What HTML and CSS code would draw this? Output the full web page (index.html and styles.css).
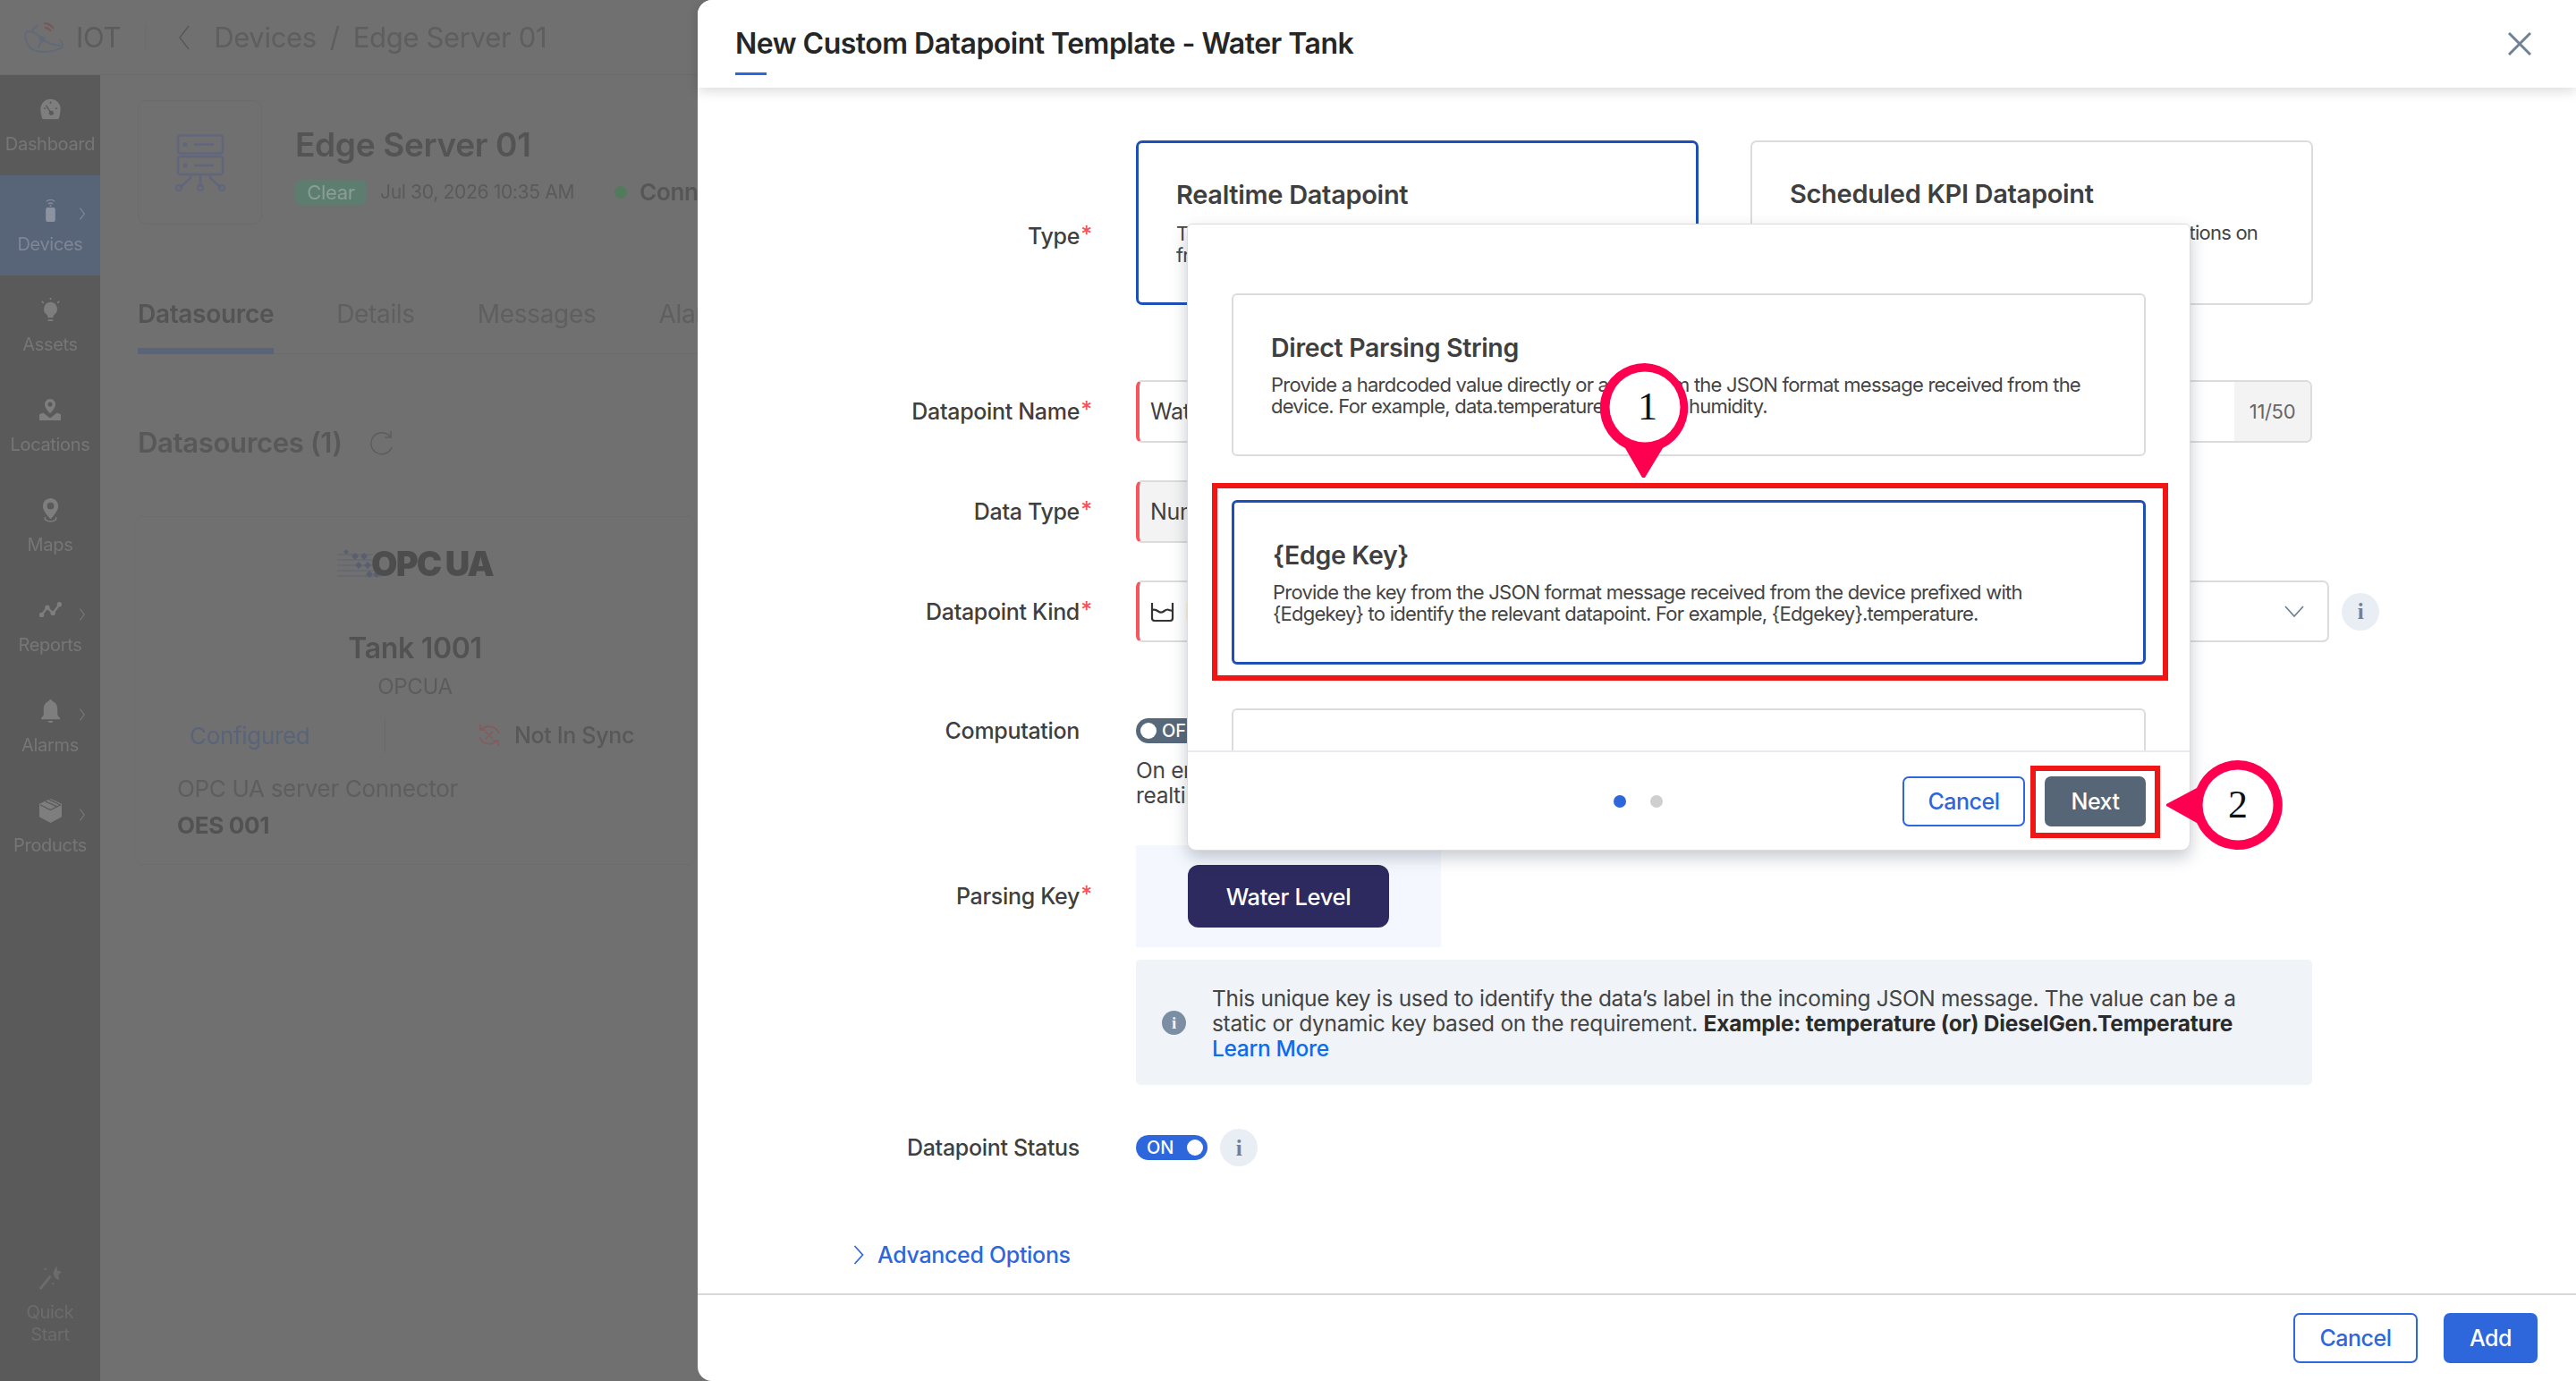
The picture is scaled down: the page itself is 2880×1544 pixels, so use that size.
FILE: index.html
```html
<!DOCTYPE html>
<html lang="en">
<head>
<meta charset="utf-8">
<title>New Custom Datapoint Template</title>
<link rel="stylesheet" href="styles.css">
</head>
<body>
<div class="app">
  <div class="backdrop">
    <header class="topbar">
      <svg class="logo" viewBox="0 0 44 40" width="44" height="40"><g fill="none" stroke="#626a78" stroke-width="2"><path d="M3 13c-3 3-2 8 0 13 3 7 10 10 18 10 10 0 20-3 22-6 1-2-2-6-3-8"/><path d="M3 13c5 0 12 3 17 8 6 5 14 8 21 8M7 14l8-8M20 22l-4 9"/><circle cx="20" cy="22" r="2.500"/></g><path d="M22 4c4 0 8 2 11 6M23 9c3 0 5 1 7 4" fill="none" stroke="#7a5656" stroke-width="2"/></svg>
      <span class="app-name">IOT</span>
      <span class="top-sep"></span>
      <svg class="back" viewBox="0 0 14 30" width="14" height="30"><path d="M12 2 2 15l10 13" fill="none" stroke="#585858" stroke-width="1.5"/></svg>
      <span class="crumb">Devices</span>
      <span class="crumb slash">/</span>
      <span class="crumb">Edge Server 01</span>
    </header>
    <div class="under">
      <nav class="sidebar">
        <a class="nav-item">
          <span class="nav-icon"><svg viewBox="0 0 28 28" width="27" height="24"><path d="M14 1a13 13 0 0 0-13 13c0 4 1 8 2 12a2 2 0 0 0 2 1h18a2 2 0 0 0 2-1c1-4 2-8 2-12A13 13 0 0 0 14 1z" fill="#7e7e7e"/><path d="m8 9 6 9M14 4v3M5 13h3M23 13h-3" stroke="#5a5a5a" stroke-width="1.6"/><circle cx="15" cy="19" r="3" fill="#5a5a5a"/></svg></span>
          <span class="nav-label">Dashboard</span>
        </a>
        <a class="nav-item active">
          <span class="nav-icon"><svg viewBox="0 0 28 42" width="19" height="28"><path d="M7 8c4-4 10-4 14 0M10 12c2-2 6-2 8 0" fill="none" stroke="#848b99" stroke-width="2"/><circle cx="14" cy="15" r="1.600" fill="#848b99"/><rect x="6" y="18" width="16" height="24" rx="3" fill="#8b92a0"/></svg><svg class="nav-chev" viewBox="0 0 10 20" width="7" height="14"><path d="m2 1 7 9-7 9" fill="none" stroke="#848b99" stroke-width="1.6"/></svg></span>
          <span class="nav-label">Devices</span>
        </a>
        <a class="nav-item">
          <span class="nav-icon"><svg viewBox="0 0 28 28" width="27" height="27"><path d="M14 5a8 8 0 0 0-5 14c1 1 2 2 2 4h6c0-2 1-3 2-4a8 8 0 0 0-5-14z" fill="#7e7e7e"/><path d="M11 26h6M14 0v2M4 4l2 2M24 4l-2 2" stroke="#7e7e7e" stroke-width="1.8"/></svg></span>
          <span class="nav-label">Assets</span>
        </a>
        <a class="nav-item">
          <span class="nav-icon"><svg viewBox="0 0 28 28" width="26" height="24"><path d="M14 0a7 7 0 0 0-7 7c0 4 4 9 7 12 3-3 7-8 7-12a7 7 0 0 0-7-7z" fill="#7e7e7e"/><circle cx="14" cy="7" r="3" fill="#5a5a5a"/><path d="M0 28v-8l5-2 9 7 9-7 5 2v8z" fill="#7e7e7e"/></svg></span>
          <span class="nav-label">Locations</span>
        </a>
        <a class="nav-item">
          <span class="nav-icon"><svg viewBox="0 0 28 28" width="27" height="27"><path d="M14 0a9 9 0 0 0-9 9c0 5 5 11 9 15 4-4 9-10 9-15a9 9 0 0 0-9-9z" fill="#7e7e7e"/><circle cx="14" cy="9" r="4" fill="#5a5a5a"/><path d="M8 22c-2 3 2 5 6 5s8-2 6-5" fill="none" stroke="#7e7e7e" stroke-width="1.5"/></svg></span>
          <span class="nav-label">Maps</span>
        </a>
        <a class="nav-item">
          <span class="nav-icon"><svg viewBox="0 0 28 20" width="27" height="18"><path d="m3 16 7-9 7 7 8-11" fill="none" stroke="#7e7e7e" stroke-width="2.600"/><circle cx="3" cy="16" r="3" fill="#7e7e7e"/><circle cx="10" cy="7" r="3" fill="#7e7e7e"/><circle cx="17" cy="14" r="3" fill="#7e7e7e"/><circle cx="25" cy="3" r="3" fill="#7e7e7e"/></svg><svg class="nav-chev" viewBox="0 0 10 20" width="7" height="14"><path d="m2 1 7 9-7 9" fill="none" stroke="#7a7a7a" stroke-width="1.6"/></svg></span>
          <span class="nav-label">Reports</span>
        </a>
        <a class="nav-item">
          <span class="nav-icon"><svg viewBox="0 0 28 28" width="27" height="27"><path d="M14 1c-1 0-2 1-2 2-4 1-6 5-6 9v7l-3 4v1h22v-1l-3-4v-7c0-4-2-8-6-9 0-1-1-2-2-2z" fill="#7e7e7e"/><path d="M11 26a3 2 0 0 0 6 0z" fill="#7e7e7e"/></svg><svg class="nav-chev" viewBox="0 0 10 20" width="7" height="14"><path d="m2 1 7 9-7 9" fill="none" stroke="#7a7a7a" stroke-width="1.6"/></svg></span>
          <span class="nav-label">Alarms</span>
        </a>
        <a class="nav-item">
          <span class="nav-icon"><svg viewBox="0 0 28 28" width="27" height="27"><path d="M14 0 1 6v15l13 7 13-7V6z" fill="#7e7e7e"/><path d="m8 3 13 6M12 1l13 6M2 7l12 6 12-6" fill="none" stroke="#5a5a5a" stroke-width="1.4"/></svg><svg class="nav-chev" viewBox="0 0 10 20" width="7" height="14"><path d="m2 1 7 9-7 9" fill="none" stroke="#7a7a7a" stroke-width="1.6"/></svg></span>
          <span class="nav-label">Products</span>
        </a>
        <a class="nav-item quick">
          <span class="nav-icon"><svg viewBox="0 0 28 28" width="27" height="27"><path d="m21 0 1 6 5 1-4 4 1 6-5-3-2-6z" fill="#6c6c6c"/><path d="M14 12 2 27" stroke="#6c6c6c" stroke-width="3"/><circle cx="8" cy="4" r="1.400" fill="#6c6c6c"/><circle cx="17" cy="21" r="1.200" fill="#6c6c6c"/></svg></span>
          <span class="nav-label">Quick<br>Start</span>
        </a>
      </nav>
      <main class="content">
        <section class="device-head">
          <div class="device-box">
            <svg viewBox="0 0 58 64" width="58" height="64"><g fill="none" stroke="#62667c" stroke-width="2.600"><rect x="4" y="1.500" width="50" height="20" rx="2.500"/><rect x="4" y="25" width="50" height="20" rx="2.500"/><path d="M22 11.500h22M22 35h22M29 45v14M18 45v4L6 60M40 45v4l12 11"/></g><circle cx="12" cy="11.500" r="2.600" fill="#62667c"/><circle cx="12" cy="35" r="2.600" fill="#62667c"/><g fill="none" stroke="#62667c" stroke-width="2"><circle cx="5" cy="60" r="3"/><circle cx="29" cy="60" r="3"/><circle cx="53" cy="60" r="3"/></g></svg>
          </div>
          <div class="device-meta">
            <h1 class="device-title">Edge Server 01</h1>
            <div class="device-status">
              <span class="badge-clear">Clear</span>
              <span class="device-date">Jul 30, 2026 10:35 AM</span>
              <span class="dot-green"></span>
              <span class="device-conn">Connected</span>
            </div>
          </div>
        </section>
        <div class="tabs">
          <span class="tab current">Datasource</span>
          <span class="tab">Details</span>
          <span class="tab">Messages</span>
          <span class="tab">Alarms</span>
        </div>
        <h2 class="ds-title">Datasources (1)
          <svg viewBox="0 0 28 28" width="28" height="28"><path d="M23 7a12 12 0 1 0 2 12" fill="none" stroke="#5c5c5c" stroke-width="1.400"/><path d="M24 1v7h-7" fill="none" stroke="#5c5c5c" stroke-width="1.400"/></svg>
        </h2>
        <article class="ds-card">
          <div class="opc-logo">
            <svg viewBox="0 0 56 32" width="56" height="32"><g stroke="#5f6371" stroke-width="1"><path d="M0 6h40M0 12h40M0 18h44M0 24h48M0 30h50"/></g><g fill="#5a5f70"><path d="m10 0 3 3-3 3-3-3zM20 4l4 4-4 4-4-4zM30 4l4 4-4 4-4-4zM24 14l4 4-4 4-4-4zM34 14l4 4-4 4-4-4zM36 24l4 4-4 4-4-4zM44 24l4 4-4 4-4-4z"/></g></svg>
            <span class="opc-text">OPC UA</span>
          </div>
          <div class="ds-name">Tank 1001</div>
          <div class="ds-type">OPCUA</div>
          <div class="ds-states">
            <span class="state configured">Configured</span>
            <span class="state sync"><svg viewBox="0 0 28 28" width="28" height="28"><g fill="none" stroke="#86595c" stroke-width="1.600"><path d="M5 8a12 12 0 0 1 20 4M23 20A12 12 0 0 1 3 16M4 2v6h6M24 26v-6h-6M10 10l8 8M18 10l-8 8"/></g></svg>Not In Sync</span>
          </div>
          <div class="ds-conn">OPC UA server Connector</div>
          <div class="ds-edge">OES 001</div>
        </article>
      </main>
    </div>
  </div>

  <section class="modal">
    <header class="modal-head">
      <h1 class="modal-title">New Custom Datapoint Template - Water Tank</h1>
      <svg class="close" viewBox="0 0 26 26" width="26" height="26"><path d="m1 1 24 24M25 1 1 25" stroke="#6f8295" stroke-width="3" fill="none"/></svg>
    </header>
    <div class="form">
      <div class="row row-type">
        <label class="label">Type<i>*</i></label>
        <div class="type-cards">
          <div class="type-card selected">
            <h3 class="card-title">Realtime Datapoint</h3>
            <p class="card-text">This datapoint receives values directly<br>from the device as messages arrive.</p>
          </div>
          <div class="type-card">
            <h3 class="card-title">Scheduled KPI Datapoint</h3>
            <p class="card-text">Values are calculated periodically via computations on<br>the data.</p>
          </div>
        </div>
      </div>
      <div class="row row-name">
        <label class="label">Datapoint Name<i>*</i></label>
        <div class="input required">
          <span class="input-value">Water Level</span>
          <span class="counter">11/50</span>
        </div>
      </div>
      <div class="row row-dtype">
        <label class="label">Data Type<i>*</i></label>
        <div class="input required disabled"><span class="input-value">Number</span></div>
      </div>
      <div class="row row-kind">
        <label class="label">Datapoint Kind<i>*</i></label>
        <div class="kind-wrap">
          <div class="input required">
            <span class="input-value">
              <svg viewBox="0 0 27 22" width="27" height="22"><path d="M2 1v17a3 3 0 0 0 3 3h17a3 3 0 0 0 3-3V1" fill="none" stroke="#333" stroke-width="2.200"/><path d="M2 9c3-1 5 0 7 1.500s4 1.500 6 0 4-3 6-1.500l4 1" fill="none" stroke="#333" stroke-width="2.200"/></svg>
              Measurement
            </span>
            <svg class="chevron" viewBox="0 0 22 14" width="22" height="14"><path d="m1 1 10 11L21 1" fill="none" stroke="#6f8295" stroke-width="1.800"/></svg>
          </div>
          <span class="info-btn">i</span>
        </div>
      </div>
      <div class="row row-comp">
        <label class="label">Computation</label>
        <div class="comp">
          <span class="toggle off"><b class="knob"></b>OFF</span>
          <p class="comp-text">On enabling this, the value of the datapoint is derived by applying a computation on the<br>realtime data.</p>
        </div>
      </div>
      <div class="row row-parse">
        <label class="label">Parsing Key<i>*</i></label>
        <div class="parse-panel"><span class="parse-btn">Water Level</span></div>
      </div>
      <div class="row row-note">
        <span></span>
        <div class="note">
          <span class="note-icon">i</span>
          <p class="note-text">This unique key is used to identify the data’s label in the incoming JSON message. The value can be a static or dynamic key based on the requirement. <strong>Example: temperature (or) DieselGen.Temperature</strong> <a class="learn">Learn More</a></p>
        </div>
      </div>
      <div class="row row-status">
        <label class="label">Datapoint Status</label>
        <div class="status">
          <span class="toggle on">ON<b class="knob"></b></span>
          <span class="info-btn">i</span>
        </div>
      </div>
      <a class="advanced">
        <svg viewBox="0 0 12 22" width="12" height="22"><path d="m1.500 1 9 10-9 10" fill="none" stroke="#2e66dc" stroke-width="1.700"/></svg>
        Advanced Options
      </a>
    </div>
    <footer class="modal-foot">
      <button class="btn ghost foot-cancel">Cancel</button>
      <button class="btn primary foot-add">Add</button>
    </footer>
  </section>

  <section class="popup">
    <div class="popup-body">
      <div class="pick-card">
        <h3 class="card-title pick-title">Direct Parsing String</h3>
        <p class="pick-text">Provide a hardcoded value directly or a key from the JSON format message received from the device. For example, data.temperature and data.humidity.</p>
      </div>
      <div class="pick-card selected">
        <h3 class="card-title pick-title">{Edge Key}</h3>
        <p class="pick-text">Provide the key from the JSON format message received from the device prefixed with {Edgekey} to identify the relevant datapoint. For example, {Edgekey}.temperature.</p>
      </div>
      <div class="pick-card last"></div>
    </div>
    <div class="popup-foot">
      <div class="dots"><span class="dot current"></span><span class="dot"></span></div>
      <div class="popup-actions">
        <button class="btn ghost pop-cancel">Cancel</button>
        <button class="btn slate pop-next">Next</button>
      </div>
    </div>
  </section>

  <div class="mark mark-card"></div>
  <div class="mark mark-next"></div>
  <div class="pin pin-one">
    <svg viewBox="0 0 102 132" width="102" height="132"><path d="M51 1a50 50 0 0 0-22 95l19 33h3l20-33A50 50 0 0 0 51 1z" fill="#ff0050"/><circle cx="51" cy="50" r="39.500" fill="#fff"/></svg>
    <span class="pin-num">1</span>
  </div>
  <div class="pin pin-two">
    <svg viewBox="0 0 132 102" width="132" height="102"><path d="M81 1a50 50 0 0 0-46 31L1 50v2l34 19A50 50 0 1 0 81 1z" fill="#ff0050"/><circle cx="81" cy="51" r="39.500" fill="#fff"/></svg>
    <span class="pin-num">2</span>
  </div>
</div>
</body>
</html>
```
FILE: styles.css
```css
* { box-sizing: border-box; }
html, body { margin: 0; padding: 0; }
body { font-family: Inter, "Liberation Sans", sans-serif; color: #3f3f3f; }
h1, h2, h3, p { margin: 0; }
button { font-family: inherit; }

.app { position: relative; display: flex; width: 2880px; height: 1544px; overflow: hidden; background: #fff; }

/* dimmed page behind the drawer */
.backdrop { display: flex; flex-direction: column; flex: 0 0 800px; min-width: 0; width: 800px; margin-right: -20px; overflow: hidden; background: #707070; color: #555; filter: blur(.7px); letter-spacing: -.02em; }
.topbar { display: flex; align-items: center; height: 84px; flex: none; padding-left: 27px; border-bottom: 1px solid #6b6b6b; }
.logo { flex: none; }
.app-name { margin-left: 14px; font-size: 31px; color: #5c5c5c; }
.top-sep { width: 1px; height: 30px; margin: 0 36px 0 27px; background: #6b6b6b; }
.back { flex: none; margin-right: 26px; }
.crumb { font-size: 31px; color: #5e5e5e; white-space: nowrap; }
.slash { margin: 0 15px; }

.under { display: flex; flex: 1; min-height: 0; }
.sidebar { display: flex; flex-direction: column; flex: 0 0 112px; background: #5a5a5a; }
.nav-item { display: flex; flex-direction: column; align-items: center; height: 112px; flex: none; padding-top: 24px; color: #767676; }
.nav-item.active { background: #586478; color: #7f8796; }
.nav-icon { position: relative; display: flex; align-items: center; justify-content: center; width: 100%; height: 28px; }
.nav-chev { position: absolute; right: 17px; top: 12px; }
.nav-label { margin-top: 13px; font-size: 20px; line-height: 25px; text-align: center; }
.quick { margin-top: auto; height: 154px; color: #6c6c6c; }

.content { flex: 1; min-width: 0; padding: 28px 0 0 42px; overflow: hidden; }
.device-head { display: flex; height: 139px; }
.device-box { display: flex; align-items: center; justify-content: center; flex: none; width: 139px; height: 139px; border: 1px solid #6b6b6b; border-radius: 10px; }
.device-meta { margin-left: 37px; padding-top: 28px; }
.device-title { font-size: 37px; line-height: 44px; font-weight: 600; color: #545454; white-space: nowrap; }
.device-status { display: flex; align-items: center; margin-top: 15px; white-space: nowrap; }
.badge-clear { width: 80px; height: 28px; border-radius: 7px; background: #5d7d70; color: #8a9e96; font-size: 22px; line-height: 28px; text-align: center; }
.device-date { margin-left: 15px; font-size: 21px; color: #5a5a5a; }
.dot-green { width: 14px; height: 14px; margin-left: 45px; border-radius: 50%; background: #527a5c; }
.device-conn { margin-left: 14px; font-size: 26px; font-weight: 600; color: #565656; }

.tabs { display: flex; gap: 70px; height: 145px; padding-top: 80px; border-bottom: 1px solid #6b6b6b; white-space: nowrap; }
.tab { height: 65px; font-size: 28px; line-height: 40px; color: #5f5f5f; }
.tab.current { font-weight: 600; color: #545454; border-bottom: 7px solid #5a6479; }
.ds-title { display: flex; align-items: center; gap: 30px; margin-top: 82px; font-size: 31px; line-height: 34px; font-weight: 600; color: #585858; white-space: nowrap; }
.ds-card { width: 628px; height: 390px; margin: 65px 0 0 -4px; padding: 36px 47px 0; border: 1px solid #6d6d6d; border-radius: 10px; }
.opc-logo { display: flex; align-items: center; justify-content: center; height: 32px; color: #4d4d4d; }
.opc-text { margin-left: -18px; font-size: 38px; line-height: 32px; font-weight: 900; letter-spacing: -.05em; }
.ds-name { margin-top: 59px; font-size: 32px; line-height: 40px; font-weight: 600; text-align: center; color: #525252; }
.ds-type { margin-top: 6px; font-size: 24px; line-height: 34px; text-align: center; color: #5c5c5c; }
.ds-states { display: flex; height: 40px; margin-top: 17px; }
.state { display: flex; align-items: center; justify-content: center; flex: 1; font-size: 26px; color: #585858; }
.state.configured { color: #5a6479; justify-content: flex-start; padding-left: 14px; border-right: 1px solid #6a6a6a; }
.state.sync { gap: 14px; padding-left: 81px; font-size: 25px; font-weight: 500; }
.ds-conn { margin-top: 20px; font-size: 26px; line-height: 40px; color: #5e5e5e; }
.ds-edge { margin-top: 1px; font-size: 26px; line-height: 40px; font-weight: 700; color: #525252; }

/* drawer */
.modal { position: relative; display: flex; flex-direction: column; flex: 1; min-width: 0; background: #fff; border-radius: 16px 0 0 16px; }
.modal-head { display: flex; align-items: center; justify-content: space-between; position: relative; z-index: 1; flex: none; height: 98px; padding: 0 50px 0 42px; background: #fff; border-radius: 16px 0 0 0; box-shadow: 0 4px 14px rgba(0,0,0,.14); }
.modal-head::after { content: ""; position: absolute; left: 42px; top: 81px; width: 35px; height: 3px; background: #2e66dc; }
.modal-title { font-size: 32px; line-height: 40px; font-weight: 600; color: #262626; letter-spacing: -.016em; white-space: nowrap; }
.close { flex: none; }

.form { flex: 1; min-height: 0; padding-top: 59px; letter-spacing: -.02em; }
.row { display: grid; grid-template-columns: 441px 1315px; column-gap: 49px; }
.label { justify-self: end; align-self: center; position: relative; padding-right: 14px; font-size: 25px; line-height: 30px; font-weight: 500; color: #3f3f3f; white-space: nowrap; }
.label i { position: absolute; right: 0; top: -2px; font-style: normal; color: #f2545b; }
.row-type .label { margin-top: 30px; }
.row-name { margin-top: 84px; }
.row-dtype, .row-kind { margin-top: 42px; }
.row-comp { margin-top: 84px; }
.row-comp .label { align-self: start; }
.row-parse { margin-top: 42px; }
.row-note { margin-top: 14px; }
.row-status { margin-top: 49px; }

.type-cards { display: flex; gap: 58px; }
.type-card { flex: 0 0 629px; height: 184px; padding: 40px 0 0 42px; border: 2px solid #dcdcdc; border-radius: 7px; }
.type-card.selected { padding-left: 42px; border: 3px solid #1e4fb8; }
.card-title { font-size: 29px; line-height: 36px; font-weight: 600; color: #3f3f3f; white-space: nowrap; }
.pick-title { font-size: 28.500px; }
.card-text { margin-top: 13px; font-size: 22px; line-height: 24px; color: #444; letter-spacing: -.035em; white-space: nowrap; }

.input { display: flex; align-items: center; height: 70px; border: 2px solid #dcdcdc; border-left: 4px solid #f9555f; border-radius: 7px; overflow: hidden; }
.input-value { display: flex; align-items: center; gap: 12px; flex: 1; padding-left: 12px; font-size: 25px; color: #3f3f3f; }
.counter { display: flex; align-items: center; justify-content: center; flex: 0 0 85px; height: 100%; background: #f3f3f3; font-size: 22px; color: #666; }
.disabled { width: 700px; background: #f3f3f3; }
.kind-wrap { display: flex; align-items: center; width: 1389px; }
.kind-wrap .input { flex: 0 0 1334px; height: 69px; }
.chevron { flex: none; margin-right: 26px; }
.info-btn { display: flex; align-items: center; justify-content: center; flex: none; width: 42px; height: 42px; margin-left: 14px; border-radius: 50%; background: #e9edf4; color: #6f8295; font: 700 25px/1 "Liberation Serif", serif; }

.comp { min-width: 0; padding-top: 1px; }
.toggle { display: flex; align-items: center; width: 80px; height: 28px; border-radius: 14px; color: #fff; font-size: 20px; font-weight: 500; line-height: 28px; letter-spacing: 0; }
.toggle.off { gap: 6px; padding-left: 5px; background: #56687a; }
.toggle.on { justify-content: space-between; padding: 0 5px 0 12px; background: #2e66dc; }
.knob { flex: none; width: 18px; height: 18px; border-radius: 50%; background: #fff; }
.comp-text { margin-top: 16px; font-size: 24.500px; line-height: 28px; color: #444; white-space: nowrap; }

.parse-panel { display: flex; align-items: center; width: 341px; height: 114px; padding-left: 58px; background: #f4f8fe; }
.parse-btn { display: flex; align-items: center; justify-content: center; width: 225px; height: 70px; border-radius: 12px; background: #2c2a5e; color: #fff; font-size: 25.500px; font-weight: 500; }

.note { display: flex; align-items: center; height: 140px; padding-right: 40px; background: #f0f4f9; border-radius: 5px; }
.note-icon { display: flex; align-items: center; justify-content: center; flex: none; width: 27px; height: 27px; margin: 0 29px; border-radius: 50%; background: #7b8ea3; color: #f0f4f9; font: 700 19px/1 "Liberation Serif", serif; }
.note-text { margin-top: 2px; font-size: 24.500px; line-height: 28px; color: #444; }
.note-text strong { font-weight: 700; color: #2b2b2b; letter-spacing: -.009em; }
.learn { display: block; color: #0a6cf0; font-weight: 500; }

.status { display: flex; align-items: center; height: 42px; }

.advanced { display: flex; align-items: center; gap: 15px; margin: 84px 0 0 174px; font-size: 25px; line-height: 30px; font-weight: 500; color: #2e66dc; }
.modal-foot { display: flex; justify-content: flex-end; gap: 29px; flex: none; height: 98px; padding: 20px 43px 0 0; border-top: 2px solid #d8d8d8; }

.btn { height: 56px; padding: 0; border-radius: 7px; font-size: 25px; font-weight: 500; letter-spacing: -.02em; }
.ghost { background: #fff; border: 2px solid #2e66dc; color: #2e66dc; }
.primary { background: #2e66dc; border: 0; color: #fff; }
.slate { background: #566677; border: 0; color: #fff; }
.foot-cancel { width: 139px; }
.foot-add { width: 105px; }

/* overlaid chooser */
.popup { position: absolute; left: 1327px; top: 250px; display: flex; flex-direction: column; width: 1122px; height: 701px; background: #fff; border: 1px solid #dcdcdc; border-radius: 6px 6px 10px 10px; box-shadow: 0 8px 18px rgba(60,70,90,.28); letter-spacing: -.02em; }
.popup-body { flex: 0 0 588px; padding: 77px 49px 0; overflow: hidden; }
.pick-card { height: 182px; padding: 41px 0 0 42px; border: 2px solid #dcdcdc; border-radius: 6px; }
.pick-card.selected { height: 184px; margin-top: 49px; padding: 41px 0 0 43px; border: 3px solid #1e4fb8; }
.pick-card.last { margin-top: 49px; }
.pick-text { margin-top: 11px; max-width: 930px; font-size: 22px; line-height: 24px; color: #444; letter-spacing: -.035em; }
.popup-foot { display: flex; align-items: center; justify-content: space-between; flex: 1; padding: 0 49px 0 0; border-top: 2px solid #e9eaef; }
.dots { display: flex; gap: 27px; margin-left: 476px; }
.dot { width: 14px; height: 14px; border-radius: 50%; background: #cfcfcf; }
.dot.current { background: #2e66dc; }
.popup-actions { display: flex; gap: 22px; }
.pop-cancel { width: 137px; }
.pop-next { width: 113px; }

/* tutorial annotations */
.mark { position: absolute; border: 6px solid #f01616; }
.mark-card { left: 1355px; top: 540px; width: 1069px; height: 221px; }
.mark-next { left: 2270px; top: 856px; width: 145px; height: 81px; }
.pin { position: absolute; display: flex; align-items: center; justify-content: center; }
.pin svg { display: block; }
.pin-num { position: absolute; font-family: "Liberation Serif", serif; font-size: 44px; line-height: 50px; color: #111; }
.pin-one { left: 1788px; top: 405px; }
.pin-one .pin-num { left: 43px; top: 25px; }
.pin-two { left: 2421px; top: 849px; }
.pin-two .pin-num { left: 70px; top: 26px; }
```
